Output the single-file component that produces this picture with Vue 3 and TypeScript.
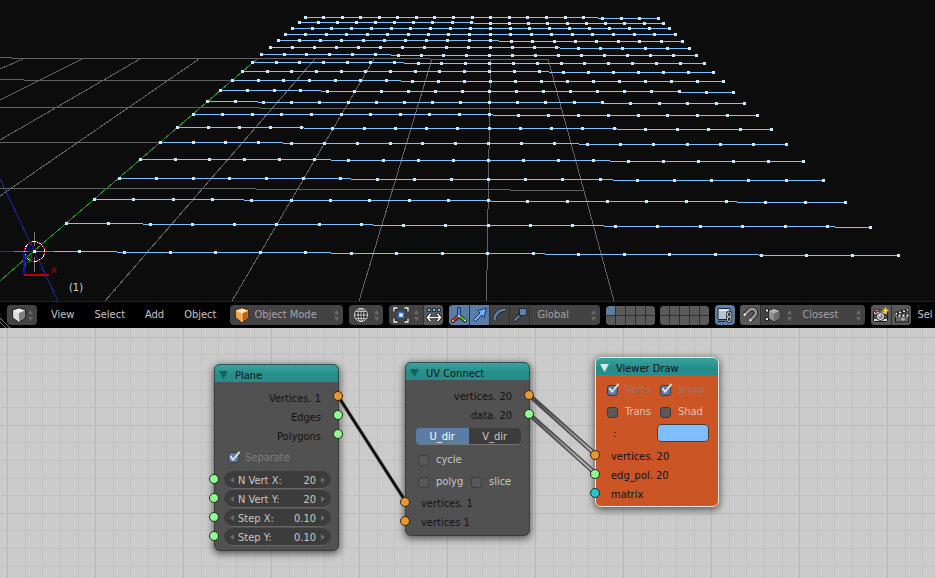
<script setup lang="ts">
import { ref } from 'vue'

type Pt = { x: number; y: number }

// Each row of the plane: left x, right x, first y, and the x positions where the y steps down by one.
const rows: { x0: number; x1: number; y: number; steps: number[] }[] = [
  { x0: 305, x1: 658, y: 17, steps: [598] },
  { x0: 299, x1: 663, y: 22, steps: [474] },
  { x0: 292, x1: 669, y: 28, steps: [] },
  { x0: 285, x1: 675, y: 34, steps: [] },
  { x0: 278, x1: 682, y: 40, steps: [499] },
  { x0: 270, x1: 689, y: 47, steps: [560] },
  { x0: 261, x1: 696, y: 54, steps: [391] },
  { x0: 252, x1: 704, y: 62, steps: [404] },
  { x0: 242, x1: 713, y: 71, steps: [549] },
  { x0: 232, x1: 723, y: 80, steps: [401] },
  { x0: 220, x1: 733, y: 90, steps: [321, 680] },
  { x0: 207, x1: 744, y: 101, steps: [258, 603] },
  { x0: 193, x1: 757, y: 114, steps: [493] },
  { x0: 177, x1: 771, y: 127, steps: [304, 617] },
  { x0: 160, x1: 786, y: 142, steps: [283, 579] },
  { x0: 140, x1: 803, y: 159, steps: [331, 610] },
  { x0: 119, x1: 823, y: 178, steps: [351, 613] },
  { x0: 94, x1: 845, y: 199, steps: [244, 491, 737] },
  { x0: 66, x1: 870, y: 223, steps: [143, 373, 604, 835] },
  { x0: 34, x1: 898, y: 251, steps: [117, 331, 545, 759] },
]

const rowPaths = rows.map((r) => {
  let d = ''
  let x = r.x0
  let y = r.y
  for (const s of [...r.steps, r.x1]) {
    d += `M${x} ${y + 0.5}H${s}`
    x = s
    y += 1
  }
  return d
})

const verts: Pt[] = rows.flatMap((r) => {
  const len = r.x1 - r.x0
  return Array.from({ length: 20 }, (_, i) => {
    const t = i / 19
    const x = Math.round(r.x0 + len * t - t * (1 - t) * len * 0.0075)
    return { x: x - 1, y: r.y + r.steps.filter((s) => s <= x).length - 1 }
  })
})

const floor = [
  'M0 57.5H12', 'M12 58.5H430', 'M430 59.5H549', 'M0 79.5H24', 'M24 80.5H232',
  'M0 107.5H260', 'M260 108.5H561', 'M0 142.5H160', 'M0 188.5H256', 'M256 189.5H510', 'M510 190.5H583',
  'M315 59L105 301', 'M374 59L232 301', 'M432 59L359 301', 'M490.5 59L486.5 301', 'M548 59L614 301',
  'M199 59L0 196', 'M140 59L0 140', 'M82 59L0 100', 'M23 59L0 69',
]

const menus = ['View', 'Select', 'Add', 'Object']

const direction = ref<'U_dir' | 'V_dir'>('U_dir')
const fields = ref([
  { id: 'nvx', label: 'N Vert X:', value: '20' },
  { id: 'nvy', label: 'N Vert Y:', value: '20' },
  { id: 'stx', label: 'Step X:', value: '0.10' },
  { id: 'sty', label: 'Step Y:', value: '0.10' },
])
const separate = ref(true)
const cycle = ref(false)
const polyg = ref(false)
const slice = ref(false)
const viewer = ref([
  { id: 'verts', label: 'Verts', on: true },
  { id: 'show', label: 'Show', on: true },
  { id: 'trans', label: 'Trans', on: false },
  { id: 'shad', label: 'Shad', on: false },
])
const drawColor = ref('#7fbfff')
const wires = [
  { x1: 529, y1: 67, x2: 595, y2: 126 },
  { x1: 529, y1: 86, x2: 595, y2: 145 },
]
</script>

<template>
  <main class="app">
    <section class="viewport" aria-label="3D view">
      <svg class="scene">
        <g shape-rendering="crispEdges" fill="none">
          <path v-for="d in floor" :key="d" :d="d" stroke="#626262" />
          <path d="M0 179L58 301" stroke="#22229a" />
          <path d="M0 281L34 251L257 59" stroke="#209020" />
          <path d="M0 251.5H14" stroke="#7a1c1c" />
          <path v-for="(d, i) in rowPaths" :key="i" :d="d" stroke="#7fbfff" />
          <path d="M14 251.5H28M39 251.5H54M34.5 232V246M34.5 257V272" stroke="#777" />
          <path d="M28 251.5H33" stroke="#333" />
          <circle cx="34.5" cy="251.5" r="10" stroke="#fff" />
          <circle cx="34.5" cy="251.5" r="10" stroke="#e00000" stroke-dasharray="4 4" />
        </g>
        <g shape-rendering="crispEdges" fill="#cfe6ff">
          <rect v-for="(v, i) in verts" :key="i" :x="v.x" :y="v.y" width="3" height="3" />
        </g>
        <g fill="none" shape-rendering="crispEdges">
          <path d="M24 252V275" stroke="#0018c0" stroke-width="2" />
          <path d="M24 275H49" stroke="#c00000" stroke-width="2" />
          <path d="M25.5 262V267" stroke="#008a00" />
        </g>
        <text x="51" y="273" fill="#b00000">x</text>
        <text x="27" y="261" fill="#009000">y</text>
        <text x="26" y="249" fill="#0000b8">z</text>
        <text x="69" y="291" fill="#d0d0d0">(1)</text>
      </svg>
    </section>

    <header class="bar">
      <svg class="grip" width="10" height="12"><path d="M0 2L10 12M0 6L6 12" stroke="#777" /></svg>
      <button class="box editor" aria-label="Editor type">
        <svg class="ic" viewBox="0 0 16 16">
          <path d="M8 .8L14.5 3 14 11 8 15.3 2 11 1.5 3z" fill="#eee" stroke="#111" />
          <path d="M2 3.4L8 6V15L2.5 10.8z" fill="#ddd" /><path d="M14 3.4L8 6V15L13.5 10.8z" fill="#808080" />
        </svg>
        <svg class="ud" viewBox="0 0 6 14"><path d="M0 5.5L3 0 6 5.5zM0 8.5L3 14 6 8.5z" /></svg>
      </button>
      <nav class="menus">
        <button v-for="m in menus" :key="m" class="menu">{{ m }}</button>
      </nav>
      <div class="box mode">
        <svg class="ic" viewBox="0 0 16 16">
          <path d="M8 .8L14.5 3 14 11 8 15.3 2 11 1.5 3z" fill="#ffdfaa" stroke="#4a2400" />
          <path d="M2 3.4L8 6V15L2.5 10.8z" fill="#f7a34a" /><path d="M14 3.4L8 6V15L13.5 10.8z" fill="#b96315" />
          <path d="M2 3.4L8 6 14 3.4M8 6V15" fill="none" stroke="#fff0d8" stroke-width=".7" />
        </svg>
        <select aria-label="Mode"><option>Object Mode</option></select>
        <svg class="ud" viewBox="0 0 6 14"><path d="M0 5.5L3 0 6 5.5zM0 8.5L3 14 6 8.5z" /></svg>
      </div>
      <button class="box shade" aria-label="Viewport shading">
        <svg class="ic" viewBox="0 0 16 16" fill="none">
          <circle cx="8" cy="8" r="6.5" fill="#222" stroke="#d8d8d8" />
          <ellipse cx="8" cy="8" rx="3" ry="6.5" stroke="#d8d8d8" /><path d="M8 1.5V14.5M1.5 8H14.5M3 4.5H13M3 11.5H13" stroke="#d8d8d8" stroke-width=".8" />
        </svg>
        <svg class="ud" viewBox="0 0 6 14"><path d="M0 5.5L3 0 6 5.5zM0 8.5L3 14 6 8.5z" /></svg>
      </button>
      <div class="box">
        <button class="seg pivot" aria-label="Pivot point">
          <svg class="ic" viewBox="0 0 16 16" fill="none">
            <path d="M1 4.5V1H4.5M11.5 1H15V4.5M15 11.5V15H11.5M4.5 15H1V11.5" stroke="#111" stroke-width="3" />
            <path d="M1 4.5V1H4.5M11.5 1H15V4.5M15 11.5V15H11.5M4.5 15H1V11.5" stroke="#fff" stroke-width="1.3" />
            <rect x="5.5" y="5.5" width="5" height="5" fill="#e8f0ff" stroke="#3268d0" stroke-width="1.5" />
          </svg>
          <svg class="ud" viewBox="0 0 6 14"><path d="M0 5.5L3 0 6 5.5zM0 8.5L3 14 6 8.5z" /></svg>
        </button>
        <button class="seg tool light" aria-label="Manipulate centers">
          <svg class="ic" viewBox="0 0 16 16">
            <path d="M1 1H5V5H1zM6 1H10V5H6zM11 1H15V5H11z" fill="#234" />
            <path d="M2 2H4V4H2zM7 2H9V4H7zM12 2H14V4H12z" fill="#82aef0" />
            <path d="M4.5 7L1.5 10.5 4.5 14M11.5 7L14.5 10.5 11.5 14M2 10.5H14" fill="none" stroke="#111" stroke-width="3.2" />
            <path d="M4.5 7L1.5 10.5 4.5 14M11.5 7L14.5 10.5 11.5 14M2 10.5H14" fill="none" stroke="#fff" stroke-width="1.6" />
          </svg>
        </button>
      </div>
      <div class="box">
        <button class="seg tool on" aria-label="Manipulator">
          <svg class="ic" viewBox="0 0 16 16" fill="none" stroke-linecap="round">
            <path d="M8 2V9L2 14M8 9L14 13.5" stroke="#112" stroke-width="4" />
            <path d="M8 9L2 13.8" stroke="#e02a18" stroke-width="2.6" /><path d="M8 9L14 13.3" stroke="#3fbe22" stroke-width="2.6" />
            <path d="M8 2V9" stroke="#4b86e0" stroke-width="2.6" /><path d="M1.8 14H2M14 13.5H14.2M8 9H8.1" stroke="#fff" stroke-width="1.5" />
          </svg>
        </button>
        <button class="seg tool on" aria-label="Translate">
          <svg class="ic" viewBox="0 0 16 16">
            <path d="M1.5 12.5L8 6 5.5 4 14.5 1 12 10.5 10 8 3.5 14.5z" fill="#78aef4" stroke="#123470" />
          </svg>
        </button>
        <button class="seg tool" aria-label="Rotate">
          <svg class="ic" viewBox="0 0 16 16" fill="none">
            <path d="M2.5 14C2.5 7 7 2.5 14 3" stroke="#202a38" stroke-width="4" /><path d="M2.5 13.5C2.5 7 7 2.5 13.5 3" stroke="#6580a8" stroke-width="2.3" />
          </svg>
        </button>
        <button class="seg tool" aria-label="Scale">
          <svg class="ic" viewBox="0 0 16 16">
            <path d="M2 14L9 7" stroke="#202a38" stroke-width="4" /><path d="M2.5 13.5L9 7" stroke="#6580a8" stroke-width="2" />
            <rect x="7.5" y="1.5" width="7" height="7" fill="#6580a8" stroke="#202a38" />
          </svg>
        </button>
        <div class="seg orient">
          <select aria-label="Orientation"><option>Global</option></select>
          <svg class="ud" viewBox="0 0 6 14"><path d="M0 5.5L3 0 6 5.5zM0 8.5L3 14 6 8.5z" /></svg>
        </div>
      </div>
      <div class="pair">
        <div v-for="g in 2" :key="g" class="layers">
          <button v-for="n in 10" :key="n" :class="{ active: g === 1 && n === 1 }" :aria-label="`Layer ${(g - 1) * 10 + n}`"></button>
        </div>
      </div>
      <div class="pair">
        <button class="box tool on" aria-label="Lock to scene">
          <svg class="ic" viewBox="0 0 16 16">
            <rect x="1" y="1.5" width="12" height="11" rx="1" fill="#b9c5d6" stroke="#1a2430" />
            <path d="M2 3H12" stroke="#fff" stroke-width="1.2" />
            <g fill="none">
              <rect x="10.5" y="5" width="3.5" height="5" rx="1.7" stroke="#222" stroke-width="2.6" /><rect x="10.5" y="9.5" width="3.5" height="5" rx="1.7" stroke="#222" stroke-width="2.6" />
              <rect x="10.5" y="5" width="3.5" height="5" rx="1.7" stroke="#ddd" /><rect x="10.5" y="9.5" width="3.5" height="5" rx="1.7" stroke="#ddd" />
            </g>
            <path d="M1 14.5H8" stroke="#1a2430" />
          </svg>
        </button>
        <div class="box">
          <button class="seg tool light" aria-label="Snap">
            <svg class="ic" viewBox="0 0 16 16" fill="none">
              <path d="M2 8.5L7 3.5C11.5-.5 16.5 5 12.500 9L7.5 14" stroke="#222" stroke-width="4.500" />
              <path d="M2.5 8L7 3.5C11.5-.5 16.5 5 12.500 9L8 13.5" stroke="#999" stroke-width="2.600" />
              <path d="M2 8.5L3.5 7M7.5 14L9 12.5" stroke="#ddd" stroke-width="2.600" />
            </svg>
          </button>
          <button class="seg element" aria-label="Snap element">
            <svg class="ic" viewBox="0 0 16 16">
              <path d="M9 1.5L15 4V11.500L9 15 3.5 11.500V4z" fill="#909090" stroke="#2a2a2a" /><path d="M4 4L9 6.500 14.500 4 9 2z" fill="#b4b4b4" /><path d="M9 6.500V14.500L14.500 11.300V4z" fill="#6c6c6c" />
              <path d="M0 1.500H4V5.500H0zM0 10H4V14H0z" fill="#222" /><path d="M1 2.500H3V4.500H1zM1 11H3V13H1z" fill="#fff" />
            </svg>
            <svg class="ud" viewBox="0 0 6 14"><path d="M0 5.5L3 0 6 5.5zM0 8.5L3 14 6 8.5z" /></svg>
          </button>
          <div class="seg target">
            <select aria-label="Snap target"><option>Closest</option></select>
            <svg class="ud" viewBox="0 0 6 14"><path d="M0 5.5L3 0 6 5.5zM0 8.5L3 14 6 8.5z" /></svg>
          </div>
        </div>
      </div>
      <div class="box">
        <button class="seg tool light" aria-label="Render still">
          <svg class="ic" viewBox="0 0 16 16">
            <rect x=".5" y="4" width="14" height="10.5" rx="1" fill="#d5d5d5" stroke="#1a1a1a" /><path d="M1 7H14V12H1z" fill="#4a4a4a" />
            <rect x="2" y="2.5" width="4" height="2" fill="#aaa" stroke="#1a1a1a" stroke-width=".7" /><path d="M2 5.5H4" stroke="#d11" stroke-width="1.5" />
            <circle cx="7.5" cy="9.5" r="4" fill="#eee" stroke="#222" /><circle cx="7.5" cy="9.5" r="2.2" fill="#666" /><circle cx="7" cy="9" r=".9" fill="#fff" />
            <path d="M12.500 0L13.500 2.500 16 3.500 13.500 4.500 12.500 7 11.500 4.500 9 3.500 11.500 2.500z" fill="#ffe04a" stroke="#c89a10" stroke-width=".8" />
          </svg>
        </button>
        <button class="seg tool light" aria-label="Render animation">
          <svg class="ic" viewBox="0 0 16 16">
            <rect x="1.5" y="7" width="13" height="8" fill="#666" stroke="#1a1a1a" /><path d="M1 5.5L14.5 1.5 15 4 1.5 8z" fill="#eee" stroke="#1a1a1a" stroke-width=".8" />
            <path d="M1.5 7.5H14.5V9.5H1.5z" fill="#eee" /><path d="M3 4.9L5 7M7 3.7L9 5.8M11 2.6L13 4.6" stroke="#111" stroke-width="1.8" />
            <path d="M4 7.5L3 9.5M8 7.5L7 9.5M12 7.5L11 9.5" stroke="#111" stroke-width="1.8" /><path d="M9 10.5V14M7 12.3H11" stroke="#bbb" />
          </svg>
        </button>
      </div>
      <button class="menu">Sel</button>
    </header>

    <section class="canvas" aria-label="Node editor">
      <article class="node plane">
        <h2><svg class="fold" viewBox="0 0 10 9"><path d="M0 0H10L5 9z" /></svg>Plane</h2>
        <div class="body">
          <div class="out">Vertices. 1<i class="sock orange"></i></div>
          <div class="out">Edges<i class="sock"></i></div>
          <div class="out">Polygons<i class="sock"></i></div>
          <label class="check faded">
            <input v-model="separate" type="checkbox" /><svg v-if="separate" class="tick" viewBox="0 0 14 13"><path d="M2.5 5.5L5.5 9.5 12.5 1" /></svg>Separate
          </label>
          <div class="fields">
            <div v-for="f in fields" :key="f.id" class="field">
              <i class="sock in"></i>
              <svg class="arr" viewBox="0 0 4 6"><path d="M4 0V6L0 3z" /></svg>
              <label :for="f.id">{{ f.label }}</label>
              <input :id="f.id" v-model="f.value" type="text" inputmode="decimal" />
              <svg class="arr" viewBox="0 0 4 6"><path d="M0 0V6L4 3z" /></svg>
            </div>
          </div>
        </div>
      </article>

      <article class="node connect">
        <h2><svg class="fold" viewBox="0 0 10 9"><path d="M0 0H10L5 9z" /></svg>UV Connect</h2>
        <div class="body">
          <div class="out">vertices. 20<i class="sock orange"></i></div>
          <div class="out">data. 20<i class="sock"></i></div>
          <div class="toggle">
            <button :class="{ on: direction === 'U_dir' }" @click="direction = 'U_dir'">U_dir</button>
            <button :class="{ on: direction === 'V_dir' }" @click="direction = 'V_dir'">V_dir</button>
          </div>
          <div class="checks">
            <label class="check"><input v-model="cycle" type="checkbox" /><svg v-if="cycle" class="tick" viewBox="0 0 14 13"><path d="M2.5 5.5L5.5 9.5 12.5 1" /></svg>cycle</label>
          </div>
          <div class="checks">
            <label class="check"><input v-model="polyg" type="checkbox" /><svg v-if="polyg" class="tick" viewBox="0 0 14 13"><path d="M2.5 5.5L5.5 9.5 12.5 1" /></svg>polyg</label>
            <label class="check"><input v-model="slice" type="checkbox" /><svg v-if="slice" class="tick" viewBox="0 0 14 13"><path d="M2.5 5.5L5.5 9.5 12.5 1" /></svg>slice</label>
          </div>
          <div class="inputs">
            <div class="inp">vertices. 1<i class="sock in orange"></i></div>
            <div class="inp">vertices 1<i class="sock in orange"></i></div>
          </div>
        </div>
      </article>

      <article class="node viewer">
        <h2><svg class="fold" viewBox="0 0 10 9"><path d="M0 0H10L5 9z" /></svg>Viewer Draw</h2>
        <div class="body">
          <div class="checks">
            <label v-for="c in viewer" :key="c.id" class="check" :class="{ faded: c.on }">
              <input v-model="c.on" type="checkbox" /><svg v-if="c.on" class="tick" viewBox="0 0 14 13"><path d="M2.5 5.5L5.5 9.5 12.5 1" /></svg>{{ c.label }}
            </label>
          </div>
          <div class="color">
            <label for="draw-color">:</label>
            <input id="draw-color" v-model="drawColor" type="color" />
          </div>
          <div class="inp">vertices. 20<i class="sock in orange"></i></div>
          <div class="inp">edg_pol. 20<i class="sock in"></i></div>
          <div class="inp">matrix<i class="sock in cyan"></i></div>
        </div>
      </article>

      <svg class="wires" fill="none">
        <defs>
          <linearGradient id="fade" gradientUnits="userSpaceOnUse" x1="529" y1="70" x2="595" y2="130">
            <stop offset="0.1" stop-color="#484848" /><stop offset="0.9" stop-color="#b4b4b4" />
          </linearGradient>
        </defs>
        <path d="M338 68L406 174" stroke="#555" stroke-width="4" stroke-opacity=".6" />
        <path d="M338 68L406 174" stroke="#0c0c0c" stroke-width="2.5" />
        <g v-for="w in wires" :key="w.y1">
          <line v-bind="w" stroke="#484848" stroke-width="4.5" />
          <line v-bind="w" stroke="url(#fade)" stroke-width="2" />
        </g>
      </svg>
    </section>
  </main>
</template>

<style>
body { margin: 0; background: #000; }
</style>

<style scoped>
* { box-sizing: border-box; }
.app {
  display: grid;
  grid-template-rows: 301fr 27px 250fr;
  grid-template-columns: minmax(0, 1fr);
  height: 100vh;
  overflow: hidden;
  font: 11px/14px "DejaVu Sans Condensed", "Noto Sans", sans-serif;
}
button, input, select { font: inherit; color: inherit; margin: 0; padding: 0; border: 0; background: none; }
select { appearance: none; min-width: 0; flex: 1; opacity: 1; }
.viewport { background: #0c0c0c; overflow: hidden; }
.scene { display: block; width: 100%; height: 100%; }
.scene text { font-size: 11px; }

.bar {
  display: flex;
  align-items: center;
  gap: 6px;
  padding-left: 7px;
  background: #000;
  border-top: 1px solid #222;
  color: #c4c4c4;
  overflow: hidden;
  position: relative;
  white-space: nowrap;
}
.grip { position: absolute; left: 0; bottom: 0; }
.box {
  display: flex;
  align-items: center;
  flex: none;
  height: 20px;
  border-radius: 4px;
  background: #434343;
  color: #a4a4a4;
  overflow: hidden;
}
.ic { width: 16px; height: 16px; flex: none; display: block; }
.ud { width: 5px; height: 13px; flex: none; fill: #686868; }
.editor { width: 30px; padding: 0 4px; justify-content: space-between; }
.menus { display: flex; gap: 20px; padding: 0 8px; flex: none; }
.mode { width: 113px; padding: 0 4px; gap: 4px; }
.shade { width: 34px; padding: 0 4px; justify-content: space-between; }
.seg { display: flex; align-items: center; height: 20px; }
.seg + .seg { border-left: 1px solid #303030; }
.tool { width: 20px; justify-content: center; }
.light { background: #585858; }
.on { background: #5b7ca3; }
.pivot { width: 34px; padding: 0 4px; justify-content: space-between; }
.orient { width: 71px; padding: 0 4px 0 7px; }
.element { width: 36px; padding: 0 4px; justify-content: space-between; }
.target { width: 69px; padding: 0 4px 0 6px; }
.seg.target { border-left: 0; }
.pair { display: flex; gap: 5px; flex: none; }
.layers {
  display: grid;
  grid-template-columns: repeat(5, 9px);
  grid-auto-rows: 9px;
  gap: 1px;
  background: #303030;
  border-radius: 4px;
  overflow: hidden;
}
.layers button { background: #5a5a5a; }
.layers .active { background: #5b7ca3; }

.canvas {
  position: relative;
  overflow: hidden;
  background-color: #cbcbcb;
  background-image:
    linear-gradient(90deg, #b9b9b9 1px, transparent 1px),
    linear-gradient(#b9b9b9 1px, transparent 1px),
    linear-gradient(90deg, transparent 18px, #c1c1c1 18px 19px, transparent 19px 35px, #c1c1c1 35px 36px, transparent 36px 53px, #c1c1c1 53px 54px, transparent 54px 71px, #c1c1c1 71px 72px, transparent 72px),
    linear-gradient(transparent 17px, #c1c1c1 17px 18px, transparent 18px 35px, #c1c1c1 35px 36px, transparent 36px 53px, #c1c1c1 53px 54px, transparent 54px 70px, #c1c1c1 70px 71px, transparent 71px);
  background-size: 88px 88px;
  background-position: 7px 9px;
}
.wires { position: absolute; inset: 0; width: 100%; height: 100%; pointer-events: none; z-index: 1; }
.node {
  position: absolute;
  width: 125px;
  border-radius: 6px;
  background: rgba(74, 74, 74, 0.95);
  box-shadow: 0 2px 7px 1px rgba(0, 0, 0, 0.55);
  color: #111;
}
.node::after {
  content: "";
  position: absolute;
  inset: 0;
  border: 1px solid rgba(50, 50, 50, 0.7);
  border-radius: 6px;
  pointer-events: none;
}
.plane { left: 214px; top: 36px; }
.connect { left: 405px; top: 34px; }
.viewer { left: 595px; top: 29px; width: 124px; background: #cb5524; }
.viewer::after { border-color: #f0e4de; }
h2 {
  display: flex;
  align-items: center;
  gap: 7px;
  height: 18px;
  margin: 0;
  padding: 5px 5px 0;
  font: inherit;
  border-radius: 6px 6px 0 0;
  background: linear-gradient(#3aa5a1, #268e8a 60%);
}
.fold { width: 9px; height: 8px; margin-bottom: 2px; fill: #175f5c; flex: none; }
.viewer .fold { fill: #cfeae8; }
.body { padding: 6px 0 5px; }
.out, .inp { position: relative; height: 19px; display: flex; align-items: center; padding: 1px 18px 0 16px; }
.out { justify-content: flex-end; }
.plane .out { padding-top: 3px; }
.sock {
  position: absolute;
  right: -4px;
  top: 3px;
  width: 10px;
  height: 10px;
  border-radius: 50%;
  border: 1px solid #1c2a1c;
  background: #92fa92;
  z-index: 2;
}
.orange { background: #e8972c; border-color: #33230c; }
.cyan { background: #28c6cc; border-color: #0c3033; }
.in { left: -5px; right: auto; }
.check { position: relative; display: flex; align-items: center; gap: 7px; color: #c8c8c8; }
.check input {
  appearance: none;
  width: 11px;
  height: 11px;
  border: 1px solid #3a3a3a;
  border-radius: 3px;
  background: #5a5a5a;
  flex: none;
}
.check input:checked { background: #5b7ca3; }
.tick { position: absolute; left: 0; top: 50%; width: 13px; height: 12px; margin-top: -7px; fill: none; stroke: #e4e4e4; stroke-width: 2; pointer-events: none; }
.faded { color: #7d7d7d; }
.plane .check { height: 19px; margin: 3px 0 4px 14px; gap: 6px; }
.fields { display: grid; grid-template-columns: minmax(0, 1fr); gap: 1px; padding: 0 8px 0 10px; }
.field {
  position: relative;
  display: flex;
  align-items: center;
  height: 18px;
  padding: 2px 6px 0;
  border-radius: 9px;
  background: #3c3c3c;
  border-bottom: 1px solid #666;
  color: #c8c8c8;
}
.field .sock { left: -15px; }
.field label { margin-left: 4px; flex: none; }
.field input { flex: 1; width: 0; min-width: 0; text-align: right; margin-right: 5px; }
.arr { width: 4px; height: 6px; fill: #6a6a6a; flex: none; margin-bottom: 2px; }

.connect .body { padding: 7px 0 4px; }
.toggle { display: grid; grid-template-columns: 1fr 1fr; margin: 3px 9px 4px 11px; height: 17px; border-radius: 4px; overflow: hidden; background: #3c3c3c; border-bottom: 1px solid #777; color: #c8c8c8; }
.toggle button { padding-top: 1px; }
.toggle .on { color: #fff; }
.checks { display: grid; grid-template-columns: 53px 1fr; grid-auto-rows: 22px; padding-left: 13px; }
.connect .check input { background: #585858; border-color: #3e3e3e; }
.inputs { padding-top: 1px; }
.viewer .body { padding: 4px 0 3px; }
.viewer .checks { padding-left: 12px; }
.viewer .check { color: #e0c4b8; }
.viewer .faded { color: #99786a; }
.color { display: flex; align-items: flex-start; justify-content: space-between; height: 24px; padding: 1px 10px 0 18px; }
.color label { padding-top: 3px; }
.color input { width: 52px; height: 18px; border: 1px solid #4a3a34; border-radius: 5px; background: #7fbfff; overflow: hidden; appearance: none; }
.color input::-webkit-color-swatch-wrapper { padding: 0; }
.color input::-webkit-color-swatch { border: 0; }
</style>
